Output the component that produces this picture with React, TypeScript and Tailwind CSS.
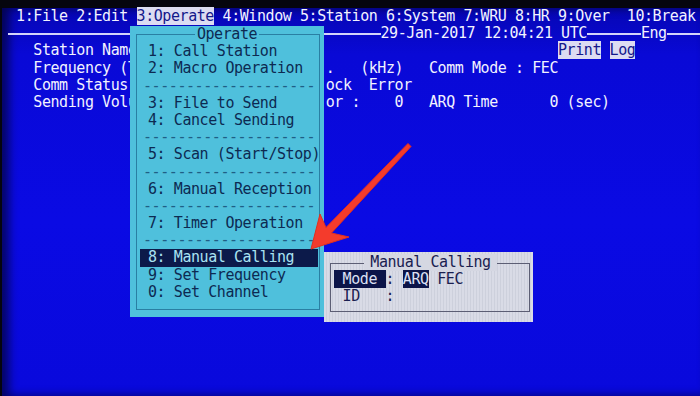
import type { ReactNode } from 'react';

type Seg = { col: number; text: string; hl?: boolean };

const MONO = "font-['DejaVu_Sans_Mono','Liberation_Mono',monospace] text-[15px] tracking-[-0.43px]";

// columns 15..36 sit under the Operate menu, so only what shows around it is written
const SCREEN_ROWS: Seg[][] = [
  [
    { col: 1, text: '1:File 2:Edit ' },
    { col: 15, text: '3:Operate', hl: true },
    { col: 24, text: ' 4:Window 5:Station 6:System 7:WRU 8:HR 9:Over  10:Break' },
  ],
  [],
  [
    { col: 3, text: 'Station Name' },
    { col: 64, text: 'Print', hl: true },
    { col: 70, text: 'Log', hl: true },
  ],
  [
    { col: 3, text: 'Frequency (T' },
    { col: 37, text: '.' },
    { col: 41, text: '(kHz)' },
    { col: 49, text: 'Comm Mode : FEC' },
  ],
  [
    { col: 3, text: 'Comm Status' },
    { col: 37, text: 'ock' },
    { col: 42, text: 'Error' },
  ],
  [
    { col: 3, text: 'Sending Volu' },
    { col: 37, text: 'or :' },
    { col: 45, text: '0' },
    { col: 49, text: 'ARQ Time' },
    { col: 63, text: '0 (sec)' },
  ],
];

const MENU_ITEMS = [
  '1: Call Station',
  '2: Macro Operation',
  '-',
  '3: File to Send',
  '4: Cancel Sending',
  '-',
  '5: Scan (Start/Stop)',
  '-',
  '6: Manual Reception',
  '-',
  '7: Timer Operation',
  '-',
  '8: Manual Calling',
  '9: Set Frequency',
  '0: Set Channel',
];

const TextRow = ({ segs }: { segs: Seg[] }) => {
  const out: ReactNode[] = [];
  let cur = 0;
  segs.forEach((s, i) => {
    if (s.col > cur) out.push(' '.repeat(s.col - cur));
    out.push(
      s.hl ? (
        <span key={i} className="bg-[#dcdcf2] text-[#14188a]">
          {s.text}
        </span>
      ) : (
        s.text
      ),
    );
    cur = s.col + s.text.length;
  });
  return <div className="h-[17.2px] leading-[17.2px] whitespace-pre">{out}</div>;
};

const DateRow = () => (
  <div className="flex h-[17.2px] items-center leading-[17.2px] whitespace-pre">
    <div className="h-[2px] w-[373px] bg-[#d4d4fa]" />
    <span>29-Jan-2017 12:04:21 UTC</span>
    <div className="h-[2px] w-[54px] bg-[#d4d4fa]" />
    <span>Eng</span>
    <div className="h-[2px] flex-1 bg-[#d4d4fa]" />
  </div>
);

const OperateMenu = () => (
  <div className={`absolute top-[26px] left-[130px] h-[291px] w-[194px] bg-[#4fc0dc] text-[#0d2a52] ${MONO}`}>
    <div className="absolute top-[8px] right-[4px] bottom-[7px] left-[6px] border border-[#2a7fa3]" />
    <div className="relative flex flex-col">
      <div className="flex h-[17.2px] justify-center leading-[17.2px]">
        <span className="bg-[#4fc0dc] px-[2px]">Operate</span>
      </div>
      {MENU_ITEMS.map((item, i) =>
        item === '-' ? (
          <div key={i} className="h-[17.2px] pl-[13px] leading-[17.2px] whitespace-pre text-[#1f5f86]">
            --------------------
          </div>
        ) : item.startsWith('8') ? (
          <div key={i} className="ml-[10px] h-[17.2px] w-[178px] bg-[#0c1a4a] pl-[8px] leading-[17.2px] whitespace-pre text-[#a9e2f2]">
            {item}
          </div>
        ) : (
          <div key={i} className="h-[17.2px] pl-[18px] leading-[17.2px] whitespace-pre">
            {item}
          </div>
        ),
      )}
    </div>
  </div>
);

const ManualCalling = () => (
  <div
    className={`absolute top-[252px] left-[324px] h-[70px] w-[209px] bg-[repeating-linear-gradient(90deg,#d9dbe6_0px,#d9dbe6_2px,#cdd0dc_2px,#cdd0dc_3px)] pt-[1.5px] text-[#1a2050] ${MONO}`}
  >
    <div className="absolute top-[11px] right-[3px] bottom-[10px] left-[6px] border border-[#5c5e74]" />
    <div className="relative flex flex-col">
      <div className="flex h-[17.2px] justify-center pl-[4px] leading-[17.2px]">
        <span className="bg-[#d5d7e2] px-[6px]">Manual Calling</span>
      </div>
      <div className="h-[17.2px] pl-[10px] leading-[17.2px] whitespace-pre">
        <span className="bg-[#0c1448] text-[#dde0f4]"> Mode </span>
        {': '}
        <span className="bg-[#0c1448] text-[#dde0f4]">ARQ</span>
        {' FEC'}
      </div>
      <div className="h-[17.2px] pl-[10px] leading-[17.2px] whitespace-pre"> ID   :</div>
    </div>
  </div>
);

export default function App() {
  return (
    <div className="relative h-[396px] w-[700px] overflow-hidden bg-[#05050e] pt-[8px] pl-[2px]">
      <div className="h-[388px] bg-[linear-gradient(180deg,#0606b4_0%,#0909d6_12%,#0a0ae4_55%,#0909dc_100%)] shadow-[inset_7px_0_10px_rgba(0,0,0,0.55)]">
        <div className={`pl-[5.5px] text-[#f2f2ff] ${MONO}`}>
          <TextRow segs={SCREEN_ROWS[0]} />
          <DateRow />
          {SCREEN_ROWS.slice(2).map((segs, i) => (
            <TextRow key={i} segs={segs} />
          ))}
        </div>
      </div>

      <OperateMenu />
      <ManualCalling />

      <svg className="pointer-events-none absolute inset-0" width="700" height="396" viewBox="0 0 700 396">
        <polygon
          points="311,249 320,214 326,227.5 408,143.5 411,146.5 331.5,233 349,237"
          fill="#f43b2c"
          stroke="#e0301f"
          strokeWidth="1"
          strokeLinejoin="round"
        />
      </svg>
    </div>
  );
}
